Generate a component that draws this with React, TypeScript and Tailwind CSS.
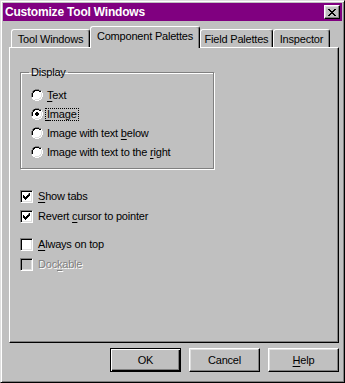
import React from "react";

const raised =
  "border border-t-white border-l-white border-r-black border-b-black shadow-[inset_-1px_-1px_#808080,inset_1px_1px_#dfdfdf]";

const tabs = [
  { label: "Tool Windows", width: "w-[79px]", active: false },
  { label: "Component Palettes", width: "w-[110px]", active: true },
  { label: "Field Palettes", width: "w-[73px]", active: false },
  { label: "Inspector", width: "w-[57px]", active: false },
];

function U({ children }: { children: React.ReactNode }) {
  return <span className="underline underline-offset-[2px]">{children}</span>;
}

function Radio({ checked }: { checked?: boolean }) {
  return (
    <svg width="12" height="12" viewBox="0 0 12 12" className="shrink-0">
      <path d="M4 0h4v1h2v1h1v2h1v4h-1v2h-1v1h-2v1h-4v-1h-2v-1h-1v-2h-1v-4h1v-2h1v-1h2z" fill="#ffffff" />
      <path d="M4 0h4v1h2v1h-2v-1h-4v1h-2v1h-1v1v1v3h-1v-4h1v-2h1v-1h2z" fill="#808080" />
      <path d="M4 1h4v1h-4v1h-2v1h-1v4h-1v-4h1v-2h1v-1h2z" fill="#808080" />
      <path d="M4 1h4v1h2v1h-2v-1h-4v1h-1v1h-1v4h-1v-4h1v-2h1v-1h2z" fill="#000000" />
      <path d="M11 4h1v4h-1v2h-1v1h-2v1h-4v-1h4v-1h2v-2h1z" fill="#ffffff" />
      <path d="M10 4h1v4h-1v2h-2v1h-4v-1h4v-1h1v-1h1z" fill="#dfdfdf" />
      {checked && <path d="M5 4h2v1h1v2h-1v1h-2v-1h-1v-2h1z" fill="#000000" />}
    </svg>
  );
}

function Check({ checked, disabled }: { checked?: boolean; disabled?: boolean }) {
  return (
    <span
      className={`w-[13px] h-[13px] shrink-0 border border-t-[#808080] border-l-[#808080] border-r-white border-b-white shadow-[inset_1px_1px_#000000,inset_-1px_-1px_#dfdfdf] flex items-center justify-center ${
        disabled ? "bg-[#c0c0c0]" : "bg-white"
      }`}
    >
      {checked && (
        <svg width="7" height="7" viewBox="0 0 7 7">
          <path d="M6 0h1v3h-1v1h-1v1h-1v1h-1v1h-1v-1h-1v-1h-1v-3h1v1h1v1h1v-1h1v-1h1z" fill="#000000" />
        </svg>
      )}
    </span>
  );
}

export default function App() {
  return (
    <div
      className="w-[345px] h-[383px] bg-[#c0c0c0] border border-t-[#dfdfdf] border-l-[#dfdfdf] border-r-black border-b-black shadow-[inset_1px_1px_#ffffff,inset_-1px_-1px_#808080] p-[2px] flex flex-col text-[11px] tracking-[-0.2px] text-black leading-none"
      style={{ fontFamily: '"Liberation Sans", Arial, sans-serif' }}
    >
      {/* title bar */}
      <div className="h-[18px] bg-[#800080] flex items-center justify-between pl-[2px] pr-[2px]">
        <span className="text-white font-bold text-[12px] tracking-[-0.2px]">Customize Tool Windows</span>
        <button className={`w-[16px] h-[14px] bg-[#c0c0c0] flex items-center justify-center ${raised}`}>
          <svg width="8" height="7" viewBox="0 0 8 7">
            <path d="M0 0h2v1h1v1h2v-1h1v-1h2v1h-1v1h-1v1h-1v1h1v1h1v1h1v1h-2v-1h-1v-1h-2v1h-1v1h-2v-1h1v-1h1v-1h1v-1h-1v-1h-1v-1h-1z" fill="#000" />
          </svg>
        </button>
      </div>

      {/* tabs */}
      <div className="mt-[5px] ml-[8px] flex items-end h-[21px] relative z-10 whitespace-nowrap">
        {tabs.map((t) =>
          t.active ? (
            <div
              key={t.label}
              className={`${t.width} h-[22px] -mb-[1px] bg-[#c0c0c0] border-t border-l border-t-white border-l-white border-r border-r-black shadow-[inset_-1px_0_#808080] rounded-t-[3px] flex items-start justify-center pt-[4px]`}
            >
              {t.label}
            </div>
          ) : (
            <div
              key={t.label}
              className={`${t.width} h-[18px] bg-[#c0c0c0] border-t border-l border-t-white border-l-white border-r border-r-black shadow-[inset_-1px_0_#808080] rounded-t-[3px] flex items-start justify-center pt-[4px]`}
            >
              {t.label}
            </div>
          )
        )}
      </div>

      {/* panel */}
      <div className="ml-[6px] w-[330px] h-[296px] border border-t-white border-l-white border-r-black border-b-black shadow-[inset_-1px_-1px_#808080] pl-[10px] pt-[19px] flex flex-col">
        <fieldset className="w-[194px] h-[102px] border border-[#808080] shadow-[1px_1px_#ffffff,inset_1px_1px_#ffffff] px-[10px] pt-[2px]">
          <legend className="px-[2px] ml-[-2px]">Display</legend>
          <div className="flex flex-col gap-[7px] mt-[9px]">
            <label className="flex items-center gap-[4px] h-[12px]">
              <Radio />
              <span>
                <U>T</U>ext
              </span>
            </label>
            <label className="flex items-center gap-[4px] h-[12px]">
              <Radio checked />
              <span className="outline outline-1 outline-dotted outline-black px-[1px] -ml-[1px]">
                <U>I</U>mage
              </span>
            </label>
            <label className="flex items-center gap-[4px] h-[12px]">
              <Radio />
              <span>
                Image with text <U>b</U>elow
              </span>
            </label>
            <label className="flex items-center gap-[4px] h-[12px]">
              <Radio />
              <span>
                Image with text to the <U>r</U>ight
              </span>
            </label>
          </div>
        </fieldset>

        <div className="flex flex-col mt-[21px]">
          <label className="flex items-center gap-[5px] h-[13px]">
            <Check checked />
            <span>
              <U>S</U>how tabs
            </span>
          </label>
          <label className="flex items-center gap-[5px] h-[13px] mt-[7px]">
            <Check checked />
            <span>
              Revert <U>c</U>ursor to pointer
            </span>
          </label>
          <label className="flex items-center gap-[5px] h-[13px] mt-[15px]">
            <Check />
            <span>
              <U>A</U>lways on top
            </span>
          </label>
          <label className="flex items-center gap-[5px] h-[13px] mt-[7px]">
            <Check disabled />
            <span className="text-[#808080] [text-shadow:1px_1px_#ffffff]">
              Doc<U>k</U>able
            </span>
          </label>
        </div>
      </div>

      {/* buttons */}
      <div className="flex justify-end gap-[8px] mt-[5px] mr-[3px]">
        <button className="w-[71px] h-[24px] bg-[#c0c0c0] border border-black shadow-[inset_1px_1px_#ffffff,inset_-1px_-1px_#000000,inset_-2px_-2px_#808080]">
          OK
        </button>
        <button className={`w-[71px] h-[24px] bg-[#c0c0c0] ${raised}`}>Cancel</button>
        <button className={`w-[71px] h-[24px] bg-[#c0c0c0] ${raised}`}>
          <U>H</U>elp
        </button>
      </div>
    </div>
  );
}
